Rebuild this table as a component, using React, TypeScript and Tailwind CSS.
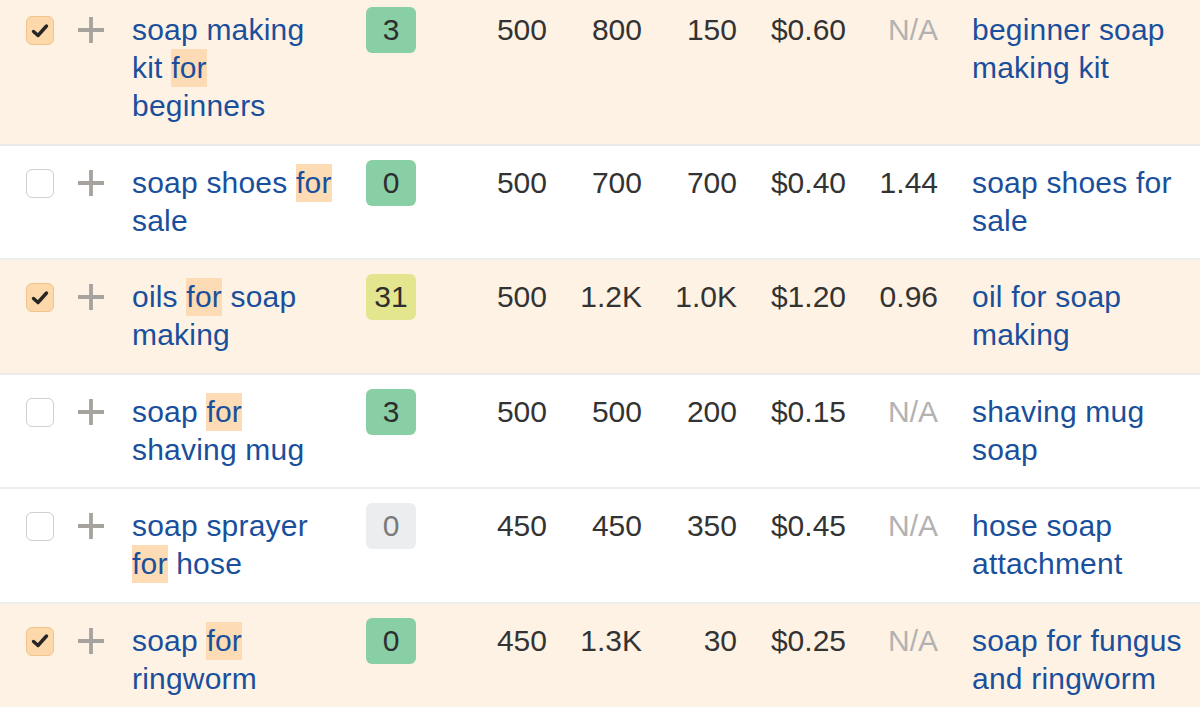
import React from "react";

type Row = {
  checked: boolean;
  kw: string[]; // parts; "for" highlighted
  kd: string;
  kdColor: "green" | "yellow" | "gray";
  vol: string;
  c2: string;
  c3: string;
  cpc: string;
  cps: string;
  parent: string;
};

const rows: Row[] = [
  { checked: true, kw: ["soap making kit ", "for", " beginners"], kd: "3", kdColor: "green", vol: "500", c2: "800", c3: "150", cpc: "$0.60", cps: "N/A", parent: "beginner soap making kit" },
  { checked: false, kw: ["soap shoes ", "for", " sale"], kd: "0", kdColor: "green", vol: "500", c2: "700", c3: "700", cpc: "$0.40", cps: "1.44", parent: "soap shoes for sale" },
  { checked: true, kw: ["oils ", "for", " soap making"], kd: "31", kdColor: "yellow", vol: "500", c2: "1.2K", c3: "1.0K", cpc: "$1.20", cps: "0.96", parent: "oil for soap making" },
  { checked: false, kw: ["soap ", "for", " shaving mug"], kd: "3", kdColor: "green", vol: "500", c2: "500", c3: "200", cpc: "$0.15", cps: "N/A", parent: "shaving mug soap" },
  { checked: false, kw: ["soap sprayer ", "for", " hose"], kd: "0", kdColor: "gray", vol: "450", c2: "450", c3: "350", cpc: "$0.45", cps: "N/A", parent: "hose soap attachment" },
  { checked: true, kw: ["soap ", "for", " ringworm"], kd: "0", kdColor: "green", vol: "450", c2: "1.3K", c3: "30", cpc: "$0.25", cps: "N/A", parent: "soap for fungus and ringworm" },
];

function Checkbox({ checked }: { checked: boolean }) {
  if (checked) {
    return (
      <div className="w-[28px] h-[29px] rounded-[6px] bg-[#fcd8aa] border-[1.5px] border-[#efc48d] flex items-center justify-center shrink-0">
        <svg width="18" height="16" viewBox="0 0 18 16">
          <path d="M2.5 8.5 L7 12.5 L15.5 3" fill="none" stroke="#262626" strokeWidth="3.4" strokeLinecap="round" strokeLinejoin="round" />
        </svg>
      </div>
    );
  }
  return <div className="w-[28px] h-[29px] rounded-[6px] bg-white border-[1.5px] border-[#cfcfcf] shrink-0" />;
}

function Plus() {
  return (
    <svg width="26" height="26" viewBox="0 0 26 26" className="shrink-0">
      <path d="M13 0 V26 M0 13 H26" stroke="#a6a39e" strokeWidth="3.8" />
    </svg>
  );
}

const kdClass: Record<Row["kdColor"], string> = {
  green: "bg-[#89cfa6] text-[#2e2e2e]",
  yellow: "bg-[#e3e68f] text-[#2e2e2e]",
  gray: "bg-[#ebedef] text-[#7a7a7a]",
};

export default function App() {
  return (
    <div
      className="w-[1200px] h-[707px] overflow-hidden bg-white"
      style={{ fontFamily: '"Liberation Sans", Arial, Helvetica, sans-serif' }}
    >
      <div className="-mt-[9px] border-t-2 border-[#e9e4de]">
        {rows.map((r, i) => (
          <div
            key={i}
            className={`flex items-start pt-[18px] pb-[18.5px] border-b-2 text-[30px] tracking-[0.2px] leading-[38px] ${
              r.checked ? "bg-[#fef2e5] border-[#ecebea]" : "bg-white border-[#ededed]"
            }`}
          >
            <div className="pl-[26px] pt-[5px] shrink-0">
              <Checkbox checked={r.checked} />
            </div>
            <div className="ml-[24px] pt-[6px] shrink-0">
              <Plus />
            </div>
            <div className="ml-[28px] w-[203px] shrink-0 text-[#1a4f9c]">
              {r.kw.map((p, j) =>
                p === "for" ? (
                  <span key={j} className="inline-block bg-[#fddbb4] leading-[38px]">
                    for
                  </span>
                ) : (
                  <span key={j}>{p}</span>
                )
              )}
            </div>
            <div className="ml-[31px] shrink-0">
              <div
                className={`w-[50px] h-[46px] -mt-[4px] rounded-[6px] flex items-center justify-center tracking-normal ${kdClass[r.kdColor]}`}
              >
                {r.kd}
              </div>
            </div>
            <div className="w-[131px] text-right text-[#333] shrink-0 tracking-normal">{r.vol}</div>
            <div className="w-[95px] text-right text-[#333] shrink-0 tracking-normal">{r.c2}</div>
            <div className="w-[95px] text-right text-[#333] shrink-0 tracking-normal">{r.c3}</div>
            <div className="w-[109px] text-right text-[#333] shrink-0 tracking-normal">{r.cpc}</div>
            <div className={`w-[92px] text-right shrink-0 tracking-normal ${r.cps === "N/A" ? "text-[#b2b2b2]" : "text-[#333]"}`}>
              {r.cps}
            </div>
            <div className="ml-[34px] w-[228px] shrink-0 text-[#1a4f9c]">{r.parent}</div>
          </div>
        ))}
      </div>
    </div>
  );
}
